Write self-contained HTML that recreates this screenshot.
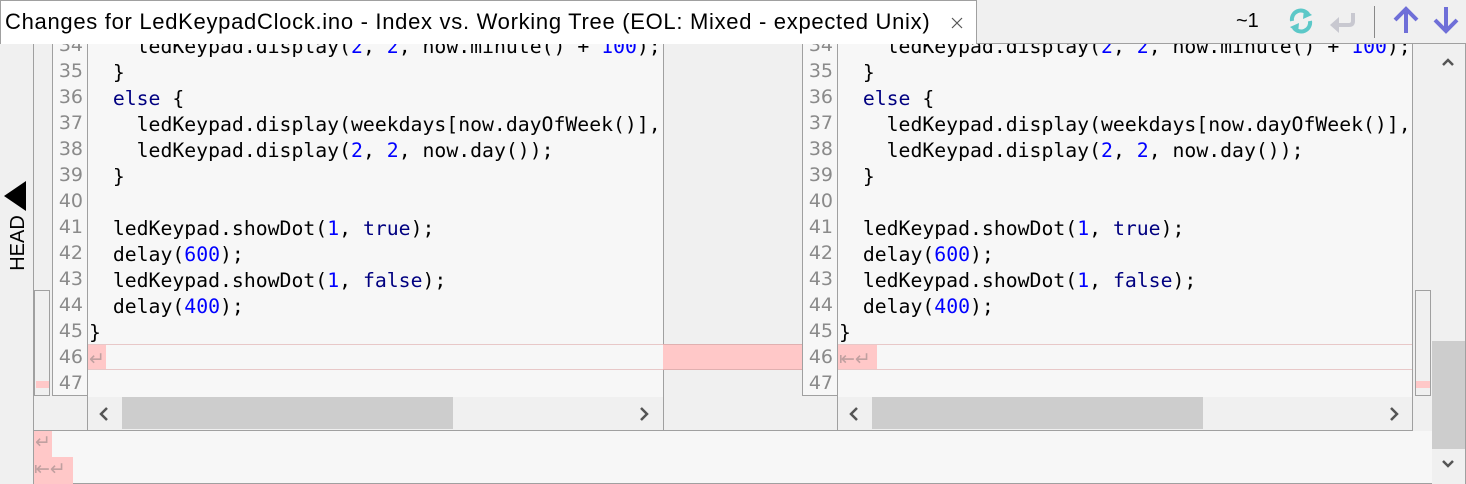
<!DOCTYPE html>
<html><head><meta charset="utf-8"><style>
*{margin:0;padding:0;box-sizing:border-box}
body{width:1466px;height:484px;overflow:hidden;background:#f0f0f0;position:relative;font-family:"Liberation Sans",sans-serif}
.a{position:absolute}
.code{font-family:"DejaVu Sans Mono",monospace;font-size:19.8px;white-space:pre;line-height:26px}
.ln{font-family:"DejaVu Sans",sans-serif;font-size:19px;color:#8a8a8a;text-align:right;line-height:26px;width:34px;padding-right:3px}
.k{color:#000080}.n{color:#0000ff}
.ws{color:#c0a0a0;font-family:"DejaVu Sans",sans-serif;font-size:19px}
</style></head><body>
<!-- left pane -->
<div class="a" style="left:33px;top:44px;width:630px;height:387px;background:#f7f7f7;border-left:1px solid #a0a0a0;border-bottom:1px solid #a0a0a0"></div>
<div class="a" style="left:34px;top:44px;width:18px;height:352px;background:#f0f0f0"></div>
<div class="a" style="left:34px;top:290px;width:16px;height:106px;border:1px solid #a0a0a0;background:#f0f0f0"></div>
<div class="a" style="left:36px;top:381px;width:13px;height:7px;background:#ffc8c8"></div>
<div class="a" style="left:52px;top:44px;width:36px;height:352px;background:#f7f7f7;border:1px solid #a0a0a0;border-top:none"></div>
<div class="a" style="left:88px;top:344px;width:575px;height:26px;border-top:1px solid #e8c8c8;border-bottom:1px solid #e8c8c8"></div>
<div class="a" style="left:88px;top:345px;width:18px;height:24px;background:#ffc8c8"></div>
<div class="a" style="left:34px;top:396px;width:54px;height:34px;background:#f0f0f0;border-right:1px solid #a0a0a0"></div>
<div class="a" style="left:88px;top:397px;width:575px;height:33px;background:#f0f0f0"></div>
<div class="a" style="left:122px;top:397px;width:331px;height:32px;background:#cdcdcd"></div>
<svg class="a" style="left:98px;top:406px" width="12" height="16"><path d="M9 2 L3 8 L9 14" stroke="#555" stroke-width="2.5" fill="none"/></svg>
<svg class="a" style="left:638px;top:406px" width="12" height="16"><path d="M3 2 L9 8 L3 14" stroke="#555" stroke-width="2.5" fill="none"/></svg>

<!-- middle -->
<div class="a" style="left:663px;top:44px;width:139px;height:387px;background:#f0f0f0;border-left:1px solid #a0a0a0;border-bottom:1px solid #a0a0a0"></div>
<div class="a" style="left:663px;top:344px;width:139px;height:26px;background:#ffc8c8;border-top:1px solid #e0b0b0;border-bottom:1px solid #e0b0b0"></div>

<!-- right pane -->
<div class="a" style="left:802px;top:44px;width:630px;height:387px;background:#f7f7f7;border-bottom:1px solid #a0a0a0"></div>
<div class="a" style="left:802px;top:44px;width:36px;height:352px;background:#f7f7f7;border:1px solid #a0a0a0;border-top:none"></div>
<div class="a" style="left:838px;top:344px;width:575px;height:26px;border-top:1px solid #e8c8c8;border-bottom:1px solid #e8c8c8"></div>
<div class="a" style="left:838px;top:345px;width:39px;height:24px;background:#ffc8c8"></div>
<div class="a" style="left:802px;top:396px;width:36px;height:34px;background:#f0f0f0;border-right:1px solid #a0a0a0"></div>
<div class="a" style="left:838px;top:397px;width:575px;height:33px;background:#f0f0f0"></div>
<div class="a" style="left:872px;top:397px;width:331px;height:32px;background:#cdcdcd"></div>
<svg class="a" style="left:848px;top:406px" width="12" height="16"><path d="M9 2 L3 8 L9 14" stroke="#555" stroke-width="2.5" fill="none"/></svg>
<svg class="a" style="left:1388px;top:406px" width="12" height="16"><path d="M3 2 L9 8 L3 14" stroke="#555" stroke-width="2.5" fill="none"/></svg>
<div class="a" style="left:1412px;top:44px;width:21px;height:387px;background:#f0f0f0;border-left:1px solid #a0a0a0"></div>
<div class="a" style="left:1415px;top:290px;width:16px;height:106px;border:1px solid #a0a0a0;background:#f0f0f0"></div>
<div class="a" style="left:1416px;top:381px;width:14px;height:7px;background:#ffc8c8"></div>
<!-- vscroll -->
<div class="a" style="left:1432px;top:44px;width:34px;height:440px;background:#f0f0f0;border-right:1px solid #a0a0a0"></div>
<div class="a" style="left:1432px;top:341px;width:33px;height:108px;background:#cdcdcd"></div>
<svg class="a" style="left:1440px;top:56px" width="16" height="12"><path d="M3 9 L8 4 L13 9" stroke="#555" stroke-width="2.5" fill="none"/></svg>
<svg class="a" style="left:1440px;top:458px" width="16" height="12"><path d="M3 3 L8 8 L13 3" stroke="#555" stroke-width="2.5" fill="none"/></svg>

<!-- bottom -->
<div class="a" style="left:33px;top:431px;width:1399px;height:53px;background:#f7f7f7;border-left:1px solid #a0a0a0;border-bottom:1px solid #a0a0a0"></div>
<div class="a" style="left:34px;top:431px;width:18px;height:26px;background:#ffc8c8"></div>
<div class="a" style="left:34px;top:457px;width:39px;height:27px;background:#ffc8c8"></div>
<div class="a ws" style="left:35px;top:429px;line-height:26px">↵</div>
<div class="a ws" style="left:34px;top:456px;line-height:26px">⇤↵</div>

<!-- code left -->
<div class="a" style="left:52px;top:44px;width:611px;height:352px;overflow:hidden">
<div class="a ln" style="left:0;top:-12px">34<br>35<br>36<br>37<br>38<br>39<br>40<br>41<br>42<br>43<br>44<br>45<br>46<br>47</div>
<div class="a code" style="left:37px;top:-10px">    ledKeypad.display(<span class="n">2</span>, <span class="n">2</span>, now.minute() + <span class="n">100</span>);
  }
  <span class="k">else</span> {
    ledKeypad.display(weekdays[now.dayOfWeek()], 
    ledKeypad.display(<span class="n">2</span>, <span class="n">2</span>, now.day());
  }

  ledKeypad.showDot(<span class="n">1</span>, <span class="k">true</span>);
  delay(<span class="n">600</span>);
  ledKeypad.showDot(<span class="n">1</span>, <span class="k">false</span>);
  delay(<span class="n">400</span>);
}
<span class="ws">↵</span></div>
</div>
<!-- code right -->
<div class="a" style="left:802px;top:44px;width:611px;height:352px;overflow:hidden">
<div class="a ln" style="left:0;top:-12px">34<br>35<br>36<br>37<br>38<br>39<br>40<br>41<br>42<br>43<br>44<br>45<br>46<br>47</div>
<div class="a code" style="left:37px;top:-10px">    ledKeypad.display(<span class="n">2</span>, <span class="n">2</span>, now.minute() + <span class="n">100</span>);
  }
  <span class="k">else</span> {
    ledKeypad.display(weekdays[now.dayOfWeek()], 
    ledKeypad.display(<span class="n">2</span>, <span class="n">2</span>, now.day());
  }

  ledKeypad.showDot(<span class="n">1</span>, <span class="k">true</span>);
  delay(<span class="n">600</span>);
  ledKeypad.showDot(<span class="n">1</span>, <span class="k">false</span>);
  delay(<span class="n">400</span>);
}
<span class="ws">⇤↵</span></div>
</div>

<!-- left strip -->
<div class="a" style="left:0;top:44px;width:33px;height:440px;background:#f0f0f0"></div>
<svg class="a" style="left:2px;top:180px" width="26" height="32"><path d="M24 1 L24 31 L2 16 Z" fill="#000"/></svg>
<div class="a" style="left:-14px;top:231px;width:64px;height:24px;transform:rotate(-90deg);font-size:20px;text-align:center;line-height:24px">HEAD</div>

<!-- header -->
<div class="a" style="left:0;top:0;width:1466px;height:44px;background:#f0f0f0;border-bottom:1px solid #a0a0a0"></div>
<div class="a" style="left:0;top:0;width:977px;height:44px;background:#fff;border:1px solid #a0a0a0;border-bottom:none"></div>
<div class="a" style="left:5px;top:9px;font-size:22px;white-space:nowrap;letter-spacing:0.7px">Changes for LedKeypadClock.ino - Index vs. Working Tree (EOL: Mixed - expected Unix)</div>
<svg class="a" style="left:951px;top:17px" width="12" height="12"><path d="M1 1 L11 11 M11 1 L1 11" stroke="#555" stroke-width="1.2"/></svg>
<div class="a" style="left:1236px;top:10px;font-size:20px">~1</div>
<svg class="a" style="left:1286px;top:6px" width="30" height="30"><path d="M6 15 A9 9 0 0 1 22 8" stroke="#5cc8c8" stroke-width="4" fill="none"/><path d="M18 3 L26 9 L17 13 Z" fill="#5cc8c8"/><path d="M24 15 A9 9 0 0 1 8 22" stroke="#5cc8c8" stroke-width="4" fill="none"/><path d="M12 27 L4 21 L13 17 Z" fill="#5cc8c8"/></svg>
<svg class="a" style="left:1328px;top:8px" width="30" height="26"><path d="M25 5 L25 13 Q25 17 21 17 L8 17" stroke="#c8c8d0" stroke-width="4" fill="none"/><path d="M2 17 L11 9 L11 25 Z" fill="#c8c8d0"/></svg>
<div class="a" style="left:1374px;top:6px;width:1px;height:32px;background:#888"></div>
<svg class="a" style="left:1392px;top:6px" width="28" height="28"><path d="M14 27 L14 6" stroke="#6f6fd8" stroke-width="4"/><path d="M3 14 L14 3 L25 14" stroke="#6f6fd8" stroke-width="4" fill="none"/></svg>
<svg class="a" style="left:1432px;top:6px" width="28" height="28"><path d="M14 1 L14 22" stroke="#6f6fd8" stroke-width="4"/><path d="M3 14 L14 25 L25 14" stroke="#6f6fd8" stroke-width="4" fill="none"/></svg>
</body></html>
